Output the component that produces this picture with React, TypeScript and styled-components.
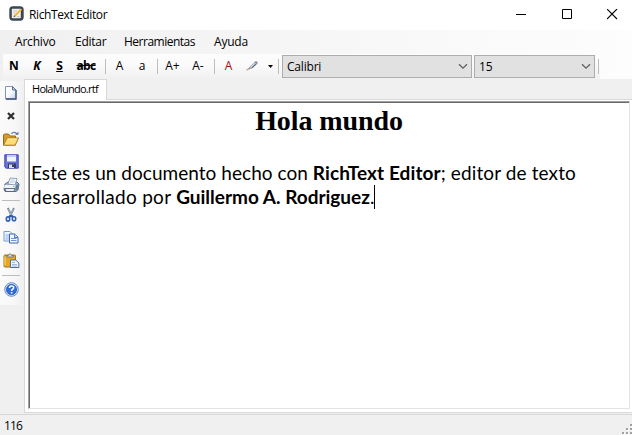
import React from 'react';
import styled, { createGlobalStyle } from 'styled-components';

const Global = createGlobalStyle`
  * { box-sizing: border-box; }
  body { margin: 0; background: #f0f0f0; }
`;

const Window = styled.div`
  width: 632px;
  height: 435px;
  display: flex;
  flex-direction: column;
  overflow: hidden;
  background: #f0f0f0;
  color: #000;
  font-family: "Open Sans", "Noto Sans", sans-serif;
  font-size: 12px;
  white-space: pre;
`;

const TitleBar = styled.header`
  height: 30px;
  flex: none;
  display: flex;
  align-items: flex-start;
  padding-left: 9px;
  background: #fff;

  > svg { margin-top: 6px; }
`;

const Title = styled.div`
  flex: 1;
  padding-left: 5px;
  line-height: 30px;
  letter-spacing: -0.39px;
`;

const Controls = styled.div`
  display: flex;
  width: 135px;
  justify-content: space-between;
  padding: 9px 14px 0 19px;
`;

const MenuBar = styled.nav`
  height: 24px;
  flex: none;
  display: flex;
  padding-left: 15px;
  background: linear-gradient(90deg, #f0f0f0, #fdfdfd);
`;

const MenuItem = styled.div<{ $w: number; $ls: number }>`
  width: ${p => p.$w}px;
  line-height: 24px;
  letter-spacing: ${p => p.$ls}px;
`;

const ToolRow = styled.div`
  height: 25px;
  flex: none;
  display: flex;
  padding-left: 3px;
  background: linear-gradient(90deg, #f0f0f0, #fdfdfd);
`;

const ToolStrip = styled.div`
  width: 597px;
  display: flex;
  align-items: flex-start;
  border-radius: 2px;
  background: linear-gradient(#fdfdfd, #fafafa 45%, #f0f0f0);

  > * { flex: none; }
`;

const Tool = styled.div<{ $w: number; $color?: string }>`
  width: ${p => p.$w}px;
  height: 24px;
  display: flex;
  align-items: center;
  justify-content: center;
  color: ${p => p.$color || '#000'};
  line-height: 24px;

  b, i, u, s { font-weight: 700; }
  s { letter-spacing: -0.6px; }
`;

const Divider = styled.div<{ $gap?: number }>`
  width: 1px;
  height: 15px;
  margin: 5px 0 0 ${p => p.$gap || 0}px;
  background: #bdbdbd;
`;

const Combo = styled.div<{ $w: number }>`
  width: ${p => p.$w}px;
  height: 23px;
  margin: 1px 2px 0 0;
  display: flex;
  align-items: center;
  justify-content: space-between;
  padding: 0 3px 0 4px;
  border: 1px solid #adadad;
  background: #e1e1e1;
  line-height: 20px;
  letter-spacing: -0.2px;
`;

const Main = styled.div`
  height: 334px;
  flex: none;
  display: flex;
`;

const SideStrip = styled.aside`
  width: 24px;
  height: 224px;
  margin-top: 2px;
  display: flex;
  flex-direction: column;
  padding-left: 2px;
  border-radius: 2px;
  background: linear-gradient(90deg, #fbfbfb, #f7f7f7 60%, #f0f0f0);
`;

const SideTool = styled.div`
  height: 23px;
  width: 18px;
  display: flex;
  align-items: center;
  justify-content: center;
`;

const SideDivider = styled.div<{ $top: number; $bottom: number }>`
  width: 18px;
  height: 1px;
  margin: ${p => p.$top}px 0 ${p => p.$bottom}px;
  background: #bdbdbd;
`;

const Tabs = styled.div`
  flex: 1;
  display: flex;
  flex-direction: column;
`;

const Tab = styled.div`
  width: 83px;
  height: 21px;
  margin-bottom: -1px;
  z-index: 1;
  padding-left: 7px;
  border: 1px solid #d9d9d9;
  border-bottom: 0;
  background: #fff;
  font-size: 11px;
  line-height: 18px;
  letter-spacing: -0.72px;
`;

const Pane = styled.div`
  height: 314px;
  padding: 1px 2px 3px 3px;
  border: 1px solid #d9d9d9;
  border-right: 0;
  background: #fff;
`;

const Editor = styled.article`
  height: 308px;
  border: 1px solid #e3e3e3;
  border-top-color: #a0a0a0;
  border-left-color: #a0a0a0;
  box-shadow: inset 1px 1px #696969;
  padding: 1px 0 0 2px;
`;

const Heading = styled.h1`
  height: 35px;
  margin: 0;
  padding-right: 2px;
  font: bold 28px/35px "Liberation Serif", serif;
  text-align: center;
  letter-spacing: -0.1px;
`;

const Paragraph = styled.p`
  margin: 23px 0 0;
  font-family: Lato, sans-serif;
  font-size: 19px;
  line-height: 24px;
`;

const Run = styled.span<{ $ls: number }>`
  letter-spacing: ${p => p.$ls}px;
`;

const BoldRun = styled(Run)`
  font-weight: 700;
`;

const Caret = styled.span`
  display: inline-block;
  width: 1px;
  height: 24px;
  vertical-align: top;
  background: #000;
`;

const StatusBar = styled.footer`
  height: 21px;
  margin-top: 1px;
  flex: none;
  display: flex;
  justify-content: space-between;
  align-items: flex-end;
  border-top: 1px solid #d7d7d7;
  padding-left: 4px;
  line-height: 19px;
  letter-spacing: -0.85px;
`;

const Chevron = () => (
  <svg width="10" height="7" viewBox="0 0 10 7"><path d="M1 1.2l4 4 4-4" fill="none" stroke="#606060" strokeWidth="1.3" /></svg>
);

const AppIcon = () => (
  <svg width="15" height="15" viewBox="0 0 15 15">
    <rect x=".3" y=".3" width="14.4" height="14.4" rx="3.6" fill="#3c4650" />
    <rect x="2.8" y="2.8" width="9" height="9.4" rx=".6" fill="#f1eee7" />
    <path d="M4.500 5h3.500M4.500 7h2M8 10.500h2.500" stroke="#b8b4ac" strokeWidth=".7" />
    <path d="M5.200 9.200l6.500-6.800 1.400 1.300-6.600 6.700z" fill="#f5b32c" />
    <path d="M4.500 11l.7-1.800 1.300 1.200z" fill="#444" />
  </svg>
);

const HighlighterIcon = () => (
  <svg width="12" height="12" viewBox="0 0 12 12">
    <path d="M.5 10.3L3.600 8.300" stroke="#c39a78" strokeWidth="1.300" />
    <path d="M2.800 8.800L4 6.800l5-4.800 1.600-.4.7 1.200-.5 1.200-5 4.300z" fill="#a9b8c5" stroke="#77828c" strokeWidth=".6" />
    <path d="M4.600 7l4-3.800" stroke="#eef5fa" strokeWidth=".9" fill="none" />
    <path d="M6 7.600l3.800-3.400" stroke="#4b5560" strokeWidth=".9" />
    <path d="M9.300 1.800l1.500 1.500" stroke="#4565a0" />
  </svg>
);

const NewIcon = () => (
  <svg width="14" height="16" viewBox="0 0 14 16">
    <defs><linearGradient id="paper" x2="1" y2="1"><stop stopColor="#fff" /><stop offset=".5" stopColor="#f7faff" /><stop offset="1" stopColor="#b9cbe8" /></linearGradient></defs>
    <path d="M1.5 1.5h7l3.5 3.5v9H1.5z" fill="url(#paper)" stroke="#8494b2" />
    <path d="M12 5v9H2" fill="none" stroke="#3d5278" strokeWidth="1.3" />
    <path d="M8.5 1.5V5H12z" fill="#c7d4ea" stroke="#4e648c" strokeWidth=".9" />
  </svg>
);

const CloseFileIcon = () => (
  <svg width="8" height="8" viewBox="0 0 8 8"><path d="M1 1l6 6M7 1L1 7" stroke="#303030" strokeWidth="2.3" /></svg>
);

const OpenIcon = () => (
  <svg width="18" height="16" viewBox="0 0 18 16">
    <path d="M1.5 14V4l1-1h4l1.5 2h5.5v9z" fill="#d89b27" stroke="#956a19" />
    <path d="M1.5 14.2L5 7h11.5L13.2 14.2z" fill="#ffdb75" stroke="#ae7b1d" />
    <path d="M5.6 8h9.3" stroke="#fff1b3" />
    <path d="M9.5 3c1-2.3 4.4-2.3 5.5.2" fill="none" stroke="#6485ad" strokeWidth="1.3" />
    <path d="M13.2 3.7h3.3V.8z" fill="#56779f" />
  </svg>
);

const SaveIcon = () => (
  <svg width="15" height="15" viewBox="0 0 15 15">
    <path d="M.8.8h13.4v13.4H2L.8 13z" fill="#6b71d8" stroke="#4248ad" />
    <path d="M3 1h9v6.5H3z" fill="#f0f4ff" /><path d="M3 1h9v2H3z" fill="#c3cdf4" />
    <path d="M4 9.5h8V14H4z" fill="#343b64" /><path d="M5 10.5h5V14H5z" fill="#dadfec" /><path d="M8 10.5h2v2.5H8z" fill="#343b64" />
  </svg>
);

const PrintIcon = () => (
  <svg width="17" height="16" viewBox="0 0 17 16">
    <path d="M2 7l3-2h9l2 2-1 6-2 1.5H2L1 12z" fill="#a4b3c8" stroke="#5f7088" />
    <path d="M5 7l2-6 7 .5L12 8z" fill="#f8fbff" stroke="#7a8fac" strokeWidth=".8" />
    <path d="M7.5 3h4M7 5h4.5" stroke="#a3bbd9" strokeWidth=".8" />
    <path d="M1.5 8h11l-.7 3H1z" fill="#edf2f8" /><path d="M13 8l2.7-1-.9 5.5-2.4 1z" fill="#637b99" />
    <path d="M2 11.5h10l-1 3H3z" fill="#e9eef5" stroke="#43566f" strokeWidth=".8" /><path d="M10 9.3h1.5" stroke="#48c765" />
  </svg>
);

const CutIcon = () => (
  <svg width="12" height="16" viewBox="0 0 12 16">
    <path d="M2.8 1l4.4 9M9 1L4.7 10" stroke="#718299" strokeWidth="1.8" />
    <path d="M3.1 2l3.5 6.6M8.5 2L5.6 8" stroke="#c7d1dd" strokeWidth=".6" />
    <path d="M5.8 8.5L3.8 10M6.2 8.5L8.5 10" stroke="#2958a6" strokeWidth="2" />
    <ellipse cx="3" cy="12" rx="1.7" ry="2.1" fill="#fff" stroke="#315fb4" strokeWidth="1.6" />
    <ellipse cx="9" cy="11.8" rx="1.7" ry="2" fill="#fff" stroke="#315fb4" strokeWidth="1.6" />
  </svg>
);

const CopyIcon = () => (
  <svg width="16" height="15" viewBox="0 0 16 15">
    <path d="M1 1.5h6l3 3V11H1z" fill="#edf5ff" stroke="#789bce" />
    <path d="M2.5 5h5M2.5 7h5M2.5 9h5" stroke="#8fb1e3" />
    <path d="M6.5 4h5.2L15 7.2V13H6.5z" fill="#f3f8ff" stroke="#3f68a7" />
    <path d="M11.5 4v3.5H15" fill="#b6ceef" stroke="#3f68a7" strokeWidth=".8" /><path d="M8 8.5h5.5M8 10.5h5.5" stroke="#6695dc" />
  </svg>
);

const PasteIcon = () => (
  <svg width="17" height="16" viewBox="0 0 17 16">
    <rect x="1" y="2" width="11.5" height="12" rx="1" fill="#e5a728" stroke="#a77415" />
    <path d="M2 3.5v8.8" stroke="#ffdd78" />
    <path d="M3.7 4V2.5h1.6C5.3.5 8.7.5 8.7 2.5h1.6V4z" fill="#d9dce0" stroke="#6f6858" strokeWidth=".8" />
    <path d="M7.5 7h5.2l3.2 3v4.5H7.5z" fill="#edf4fd" stroke="#536e94" /><path d="M9 9.5h3M9 11.5h5M9 13h5" stroke="#91abd1" strokeWidth=".8" />
  </svg>
);

const HelpIcon = () => (
  <svg width="15" height="15" viewBox="0 0 15 15">
    <circle cx="7.5" cy="7.5" r="6.8" fill="#dce8fb" stroke="#5781c7" strokeWidth=".9" />
    <circle cx="7.5" cy="7.5" r="5.2" fill="#2e6cd8" stroke="#1f50a4" strokeWidth=".6" />
    <path d="M5.500 6c0-2.800 4.200-2.600 4.200-.3C9.700 7.200 7.600 7.200 7.600 8.900" fill="none" stroke="#fff" strokeWidth="1.5" />
    <path d="M6.800 10h1.600v1.500h-1.600z" fill="#fff" />
  </svg>
);

const SizeGrip = () => (
  <svg width="10" height="11" viewBox="0 0 10 11" shapeRendering="crispEdges">
    <path d="M9 1h2v2H9zM5 5h2v2H5zM9 5h2v2H9zM1 9h2v2H1zM5 9h2v2H5zM9 9h2v2H9z" fill="#fff" />
    <path d="M8 0h2v2H8zM4 4h2v2H4zM8 4h2v2H8zM0 8h2v2H0zM4 8h2v2H4zM8 8h2v2H8z" fill="#a0a0a0" />
  </svg>
);

export default function App() {
  return (
    <Window>
      <Global />
      <TitleBar>
        <AppIcon />
        <Title>RichText Editor</Title>
        <Controls>
          <svg width="11" height="11"><path d="M0 5.5h10" stroke="#000" /></svg>
          <svg width="11" height="11"><path d="M.5.5h9v9h-9z" fill="none" stroke="#000" /></svg>
          <svg width="11" height="11"><path d="M0 0l10 10M10 0L0 10" stroke="#000" strokeWidth="1.1" /></svg>
        </Controls>
      </TitleBar>
      <MenuBar>
        <MenuItem $w={60} $ls={-0.2}>Archivo</MenuItem>
        <MenuItem $w={49} $ls={-0.25}>Editar</MenuItem>
        <MenuItem $w={90} $ls={-0.5}>Herramientas</MenuItem>
        <MenuItem $w={60} $ls={-0.2}>Ayuda</MenuItem>
      </MenuBar>
      <ToolRow>
        <ToolStrip>
          <Tool $w={22}><b>N</b></Tool>
          <Tool $w={24}><i>K</i></Tool>
          <Tool $w={21}><u>S</u></Tool>
          <Tool $w={32}><s>abc</s></Tool>
          <Divider $gap={3} />
          <Tool $w={27}>A</Tool>
          <Tool $w={18}>a</Tool>
          <Divider $gap={6} />
          <Tool $w={29}>A+</Tool>
          <Tool $w={22}>A-</Tool>
          <Divider $gap={5} />
          <Tool $w={27} $color="#9c1010">A</Tool>
          <Tool $w={20}><HighlighterIcon /></Tool>
          <Tool $w={16}><svg width="5" height="3"><path d="M0 0h5L2.500 3z" /></svg></Tool>
          <Divider />
          <Tool $w={3} />
          <Combo $w={190}>Calibri<Chevron /></Combo>
          <Combo $w={121}>15<Chevron /></Combo>
          <Divider $gap={1} />
        </ToolStrip>
      </ToolRow>
      <Main>
        <SideStrip>
          <SideTool><NewIcon /></SideTool>
          <SideTool><CloseFileIcon /></SideTool>
          <SideTool><OpenIcon /></SideTool>
          <SideTool><SaveIcon /></SideTool>
          <SideTool><PrintIcon /></SideTool>
          <SideDivider $top={4} $bottom={2} />
          <SideTool><CutIcon /></SideTool>
          <SideTool><CopyIcon /></SideTool>
          <SideTool><PasteIcon /></SideTool>
          <SideDivider $top={3} $bottom={2} />
          <SideTool><HelpIcon /></SideTool>
        </SideStrip>
        <Tabs>
          <Tab>HolaMundo.rtf</Tab>
          <Pane>
            <Editor>
              <Heading>Hola mundo</Heading>
              <Paragraph>
                <Run $ls={0.04}>Este es un documento hecho con </Run>
                <BoldRun $ls={0.1}>RichText Editor</BoldRun>
                <Run $ls={0.12}>; editor de texto</Run>
                <br />
                <Run $ls={0.3}>desarrollado por </Run>
                <BoldRun $ls={0}>Guillermo A. Rodriguez</BoldRun>
                <Run $ls={0}>.</Run>
                <Caret />
              </Paragraph>
            </Editor>
          </Pane>
        </Tabs>
      </Main>
      <StatusBar>116<SizeGrip /></StatusBar>
    </Window>
  );
}
